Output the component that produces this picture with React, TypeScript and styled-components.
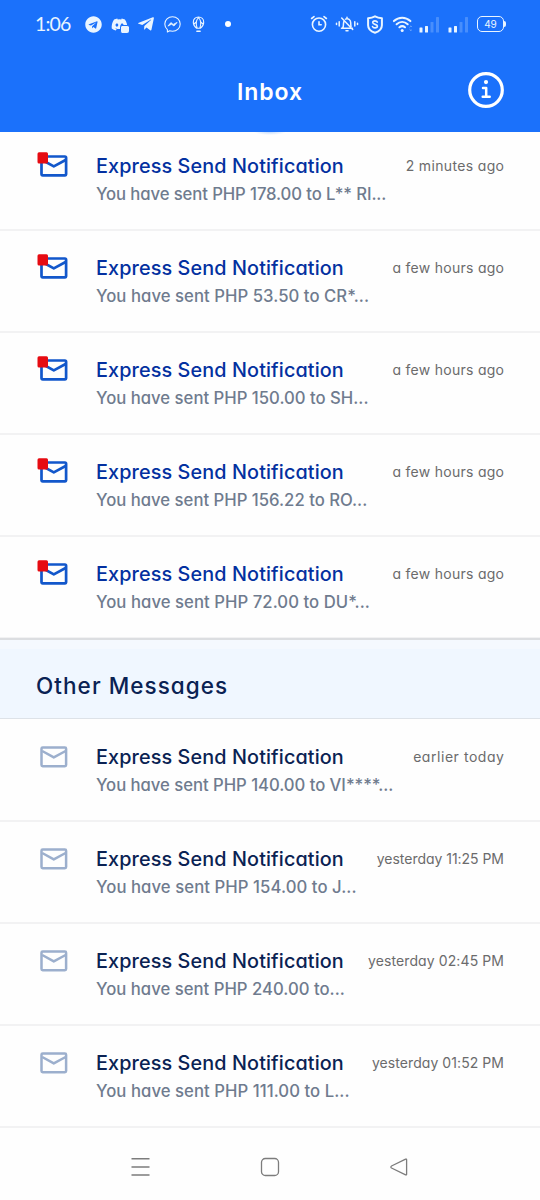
import React from 'react';
import styled, { createGlobalStyle } from 'styled-components';
import { FaTelegram, FaTelegramPlane, FaDiscord } from 'react-icons/fa';

const GlobalStyle = createGlobalStyle`
  * { box-sizing: border-box; }
  body {
    margin: 0;
    background: #fefefe;
    font-family: Inter, "Open Sans", sans-serif;
    font-feature-settings: "cv11", "ss03";
  }
`;

const Screen = styled.div`
  width: 540px;
  height: 1200px;
  display: flex;
  flex-direction: column;
  overflow: hidden;
`;

const Header = styled.header`
  position: relative;
  height: 132px;
  flex: none;
  background: #1b71fb;
  color: #fff;
  &::after {
    content: '';
    position: absolute;
    top: 132px;
    left: 254px;
    width: 32px;
    height: 3px;
    background: radial-gradient(ellipse at 50% 0, #c3dbfc, #fefefe 70%);
  }
`;

const StatusBar = styled.div`
  height: 48px;
  padding: 0 33px 0 35px;
  display: flex;
  align-items: center;
  justify-content: space-between;
`;

const StatusGroup = styled.div<{ $gap: number }>`
  display: flex;
  align-items: center;
  gap: ${(p) => p.$gap}px;
  color: #eaf5ff;
  svg { display: block; flex: none; }
`;

const Clock = styled.span`
  width: 41px;
  font-family: Lato, sans-serif;
  font-size: 19.5px;
  line-height: 24px;
  letter-spacing: -0.8px;
  white-space: nowrap;
`;

const Dot = styled.span`
  width: 6px;
  height: 6px;
  margin-left: 10px;
  border-radius: 50%;
  background: #fff;
`;

const TitleBar = styled.div`
  height: 84px;
  padding: 0 36px;
  display: grid;
  grid-template-columns: 36px 1fr 36px;
  align-items: center;
`;

const ScreenTitle = styled.h1`
  grid-column: 2;
  margin: 3px 0 0;
  font-size: 23px;
  line-height: 28px;
  font-weight: 600;
  letter-spacing: 0.9px;
  text-align: center;
`;

const InfoButton = styled.button`
  padding: 0;
  border: 0;
  background: none;
  height: 36px;
`;

const List = styled.ul<{ $clipped?: boolean }>`
  margin: ${(p) => (p.$clipped ? '-3px 0 -1px' : '1px 0 0')};
  padding: 0;
  list-style: none;
`;

const Row = styled.li`
  height: 102px;
  padding: 22px 36px 0;
  display: flex;
  align-items: flex-start;
  border-bottom: 2px solid #f2f2f3;
`;

const IconCell = styled.div`
  width: 60px;
  height: 36px;
  flex: none;
  svg { display: block; }
`;

const RowBody = styled.div`
  flex: 1;
  min-width: 0;
`;

const RowTop = styled.div`
  height: 30px;
  display: flex;
  align-items: center;
  justify-content: space-between;
`;

const Subject = styled.span<{ $unread: boolean }>`
  color: ${(p) => (p.$unread ? '#0330a0' : '#0a2253')};
  font-size: 19.8px;
  font-weight: 500;
  letter-spacing: 0.12px;
  white-space: nowrap;
`;

const Time = styled.span<{ $tracking: number }>`
  margin-top: -2px;
  margin-right: ${(p) => -p.$tracking}px;
  color: #6b6b6c;
  font-size: 14px;
  font-weight: 400;
  letter-spacing: ${(p) => p.$tracking}px;
  white-space: nowrap;
`;

const Preview = styled.div<{ $tracking: number }>`
  color: #6f7b8e;
  font-size: 16.7px;
  line-height: 26px;
  font-weight: 500;
  letter-spacing: ${(p) => p.$tracking}px;
  white-space: nowrap;
`;

const SectionHeader = styled.h2`
  height: 81px;
  flex: none;
  position: relative;
  margin: 0;
  padding: 12px 36px 0;
  display: flex;
  align-items: center;
  border-top: 2px solid #dcdee1;
  border-bottom: 1px solid #dde2e8;
  background: linear-gradient(#f5f9fe 9px, #f0f7ff 9px);
  color: #0a2253;
  font-size: 22.5px;
  font-weight: 500;
  letter-spacing: 1.05px;
`;

const NavBar = styled.nav`
  flex: 1;
  padding: 6px 131px 0;
  display: flex;
  align-items: center;
  justify-content: space-between;
  svg { display: block; }
`;

const AlarmIcon = () => (
  <svg width="18" height="18" viewBox="0 0 18 18" fill="none" stroke="currentColor" strokeWidth="1.6" strokeLinecap="round">
    <circle cx="9" cy="9.6" r="6.6" />
    <path d="M9 6.8v3h2.200M1.600 3.500 4 1.600M16.400 3.500 14 1.600" />
  </svg>
);

const SilentIcon = () => (
  <svg width="24" height="18" viewBox="0 0 24 18" fill="none" stroke="currentColor" strokeWidth="1.500" strokeLinecap="round">
    <path d="M6.500 13.300h10.900M7.600 13c.8-1 .9-2.500.9-4.600 0-1 .3-1.900.8-2.600M10.500 4.200c2.600-1.300 5.200.4 5.200 3.500 0 1.700.1 2.800.4 3.700M12 2.200v1M11 15.700h2M6.700 3l11 11.500M4.200 6.800v4.200M1.500 8.200v1.400M19.800 6.800v4.200M22.500 8.200v1.400" />
  </svg>
);

const ShieldIcon = () => (
  <svg width="18" height="19" viewBox="0 0 18 19" fill="none" stroke="currentColor" strokeWidth="2" strokeLinejoin="round" strokeLinecap="round">
    <path d="M9 1.300c2 1.100 4.200 1.700 6.900 1.900v7c0 3.900-2.900 6.200-6.900 7.600-4-1.400-6.900-3.700-6.900-7.600v-7C4.800 3 7 2.400 9 1.300Z" />
    <path d="M11.300 7.100C10.900 6.200 10.100 5.900 9 5.900c-1.300 0-2.300.6-2.300 1.700 0 2.400 4.700 1.100 4.700 3.500 0 1.200-1.100 1.800-2.400 1.800-1.200 0-2.100-.4-2.500-1.400" strokeWidth="1.600" />
  </svg>
);

const WifiIcon = () => (
  <svg width="21.500" height="18" viewBox="-1.500 0 21.500 18" fill="none" stroke="currentColor" strokeWidth="2" strokeLinecap="round">
    <path d="M1.400 6.100c4.900-4.600 11.600-4.600 16.500 0M4.100 9.300c3.300-3 7.800-3 11.100 0M6.900 12.300c1.700-1.400 3.900-1.400 5.600 0" />
    <circle cx="9.700" cy="15.500" r="1.500" fill="currentColor" stroke="none" />
    <path d="m17.300 12 1.200-1.200 1.100 1.200M17.300 14.500l1.200 1.200 1.100-1.200" strokeWidth="1" opacity=".4" />
  </svg>
);

const SignalIcon = () => (
  <svg width="22" height="17" viewBox="0 0 22 17" fill="currentColor">
    <rect x="0.500" y="11.500" width="3" height="5" rx=".5" />
    <rect x="6" y="10" width="3" height="6.500" rx=".5" />
    <rect x="11.500" y="6" width="3" height="10.500" rx=".5" opacity=".22" />
    <rect x="17" y="1" width="3" height="15.500" rx=".5" opacity=".22" />
  </svg>
);

const BatteryBody = styled.span`
  position: relative;
  width: 27px;
  height: 16px;
  margin-right: 3px;
  display: flex;
  align-items: center;
  justify-content: center;
  border: 1.5px solid currentColor;
  border-radius: 5px;
  font-size: 10px;
  line-height: 12px;
  &::after {
    content: '';
    position: absolute;
    right: -3px;
    top: 4px;
    width: 2px;
    height: 6px;
    border-radius: 0 2px 2px 0;
    background: currentColor;
  }
`;

const MessengerIcon = () => (
  <svg width="17" height="17" viewBox="0 0 17 17" fill="none" stroke="currentColor" strokeWidth="1.100" strokeLinejoin="round">
    <path d="M8.500.8C4.100.8.800 4 .8 8.100c0 2.300 1 4.200 2.600 5.500v2.300l2.200-1.100c.9.300 1.900.4 2.900.4 4.400 0 7.700-3.100 7.700-7.100S12.900.8 8.500.8Z" />
    <path d="m3.900 10.100 3-3.500 2.300 1.800 3.900-2-3.200 3.600-2.300-1.800Z" fill="currentColor" strokeWidth=".8" />
  </svg>
);

const BalloonIcon = () => (
  <svg width="16" height="17" viewBox="-2.500 0 16 17" fill="none" stroke="currentColor" strokeWidth="1.100">
    <path d="M4.100 12.300C2 10.500.8 8.600.8 6.200.8 3.100 3 1 6 1s5.200 2.100 5.200 5.200c0 2.400-1.200 4.300-3.300 6.100ZM4.600 12C3.200 8 3.600 4.200 6 1.500 8.400 4.200 8.800 8 7.400 12M1.500 8 4.300 5.500M10.500 8 7.700 5.500" />
    <path d="M4.400 15.200h3.200" strokeWidth="1.500" strokeLinecap="round" />
  </svg>
);

const DiscordAlert = styled.span`
  position: relative;
  display: flex;
  &::after {
    content: '';
    position: absolute;
    right: -1px;
    bottom: 0;
    width: 8px;
    height: 7px;
    border: 1px solid #1b71fb;
    border-width: 1px 0 0 1px;
    border-radius: 2px;
    background: #eaf5ff;
  }
`;

const InfoIcon = () => (
  <svg width="36" height="36" viewBox="0 0 36 36" fill="none" stroke="#fff" strokeLinecap="round">
    <circle cx="18" cy="18" r="16.300" strokeWidth="3.200" />
    <circle cx="18" cy="10.100" r="2.100" fill="#fff" stroke="none" />
    <path d="M15 15.900h3.200v8.900M14.700 24.800h7" strokeWidth="2.500" strokeLinejoin="round" />
  </svg>
);

const MailIcon = ({ unread }: { unread: boolean }) => (
  <svg width="34" height="32" viewBox="0 0 34 32" fill="none">
    <g stroke={unread ? '#1257cb' : '#9cafcd'} strokeWidth={unread ? 2.700 : 2.500} strokeLinejoin="round">
      <rect x="5.500" y="5.500" width="24.600" height="18.800" rx="1.200" />
      <path d="m6.200 9 11.600 6.400L29.600 9" />
    </g>
    {unread && <rect x="1.500" y="1.200" width="10.500" height="11.300" rx="1.500" fill="#e60b12" />}
  </svg>
);

const MenuIcon = () => (
  <svg width="19" height="20" viewBox="0 0 19 20" stroke="#7c7c7c" strokeWidth="1.500">
    <path d="M.5 1.800h18M.5 10h18M.5 18h18" />
  </svg>
);

const HomeIcon = () => (
  <svg width="20" height="20" viewBox="0 0 20 20" fill="none" stroke="#7c7c7c" strokeWidth="1.300">
    <rect x="1.500" y="1.500" width="17" height="17" rx="3.800" />
  </svg>
);

const BackIcon = () => (
  <svg width="20" height="20" viewBox="0 0 20 20" fill="none" stroke="#7c7c7c" strokeWidth="1.300" strokeLinejoin="round">
    <path d="M16.600 2.200 2.500 9c-.8.500-.8 1.500 0 2l14.100 6.800c.6.300 1 0 1-.6V2.800c0-.6-.4-.9-1-.6Z" />
  </svg>
);

interface Message {
  preview: string;
  time: string;
  tracking: number;
  timeTracking: number;
}

const unreadMessages: Message[] = [
  { preview: 'You have sent PHP 178.00 to L** RI...', time: '2 minutes ago', tracking: -0.1, timeTracking: 0.35 },
  { preview: 'You have sent PHP 53.50 to CR*...', time: 'a few hours ago', tracking: 0.05, timeTracking: 0.27 },
  { preview: 'You have sent PHP 150.00 to SH...', time: 'a few hours ago', tracking: 0, timeTracking: 0.27 },
  { preview: 'You have sent PHP 156.22 to RO...', time: 'a few hours ago', tracking: 0, timeTracking: 0.27 },
  { preview: 'You have sent PHP 72.00 to DU*...', time: 'a few hours ago', tracking: 0.05, timeTracking: 0.27 },
];

const otherMessages: Message[] = [
  { preview: 'You have sent PHP 140.00 to VI****...', time: 'earlier today', tracking: -0.04, timeTracking: 0.55 },
  { preview: 'You have sent PHP 154.00 to J...', time: 'yesterday 11:25 PM', tracking: 0.07, timeTracking: -0.03 },
  { preview: 'You have sent PHP 240.00 to...', time: 'yesterday 02:45 PM', tracking: 0.01, timeTracking: 0.1 },
  { preview: 'You have sent PHP 111.00 to L...', time: 'yesterday 01:52 PM', tracking: 0.05, timeTracking: 0.07 },
];

const MessageRow = ({ message, unread = false }: { message: Message; unread?: boolean }) => (
  <Row>
    <IconCell>
      <MailIcon unread={unread} />
    </IconCell>
    <RowBody>
      <RowTop>
        <Subject $unread={unread}>Express Send Notification</Subject>
        <Time $tracking={message.timeTracking}>{message.time}</Time>
      </RowTop>
      <Preview $tracking={message.tracking}>{message.preview}</Preview>
    </RowBody>
  </Row>
);

export default function App() {
  return (
    <Screen>
      <GlobalStyle />
      <Header>
        <StatusBar>
          <StatusGroup $gap={9}>
            <Clock>1:06</Clock>
            <FaTelegram size={17} />
            <DiscordAlert><FaDiscord size={17} /></DiscordAlert>
            <FaTelegramPlane size={18} />
            <MessengerIcon />
            <BalloonIcon />
            <Dot />
          </StatusGroup>
          <StatusGroup $gap={7}>
            <AlarmIcon />
            <SilentIcon />
            <ShieldIcon />
            <WifiIcon />
            <SignalIcon />
            <SignalIcon />
            <BatteryBody>49</BatteryBody>
          </StatusGroup>
        </StatusBar>
        <TitleBar>
          <ScreenTitle>Inbox</ScreenTitle>
          <InfoButton aria-label="Information"><InfoIcon /></InfoButton>
        </TitleBar>
      </Header>
      <List $clipped>
        {unreadMessages.map((m) => (
          <MessageRow key={m.preview} message={m} unread />
        ))}
      </List>
      <SectionHeader>Other Messages</SectionHeader>
      <List>
        {otherMessages.map((m) => (
          <MessageRow key={m.preview} message={m} />
        ))}
      </List>
      <NavBar>
        <MenuIcon />
        <HomeIcon />
        <BackIcon />
      </NavBar>
    </Screen>
  );
}
